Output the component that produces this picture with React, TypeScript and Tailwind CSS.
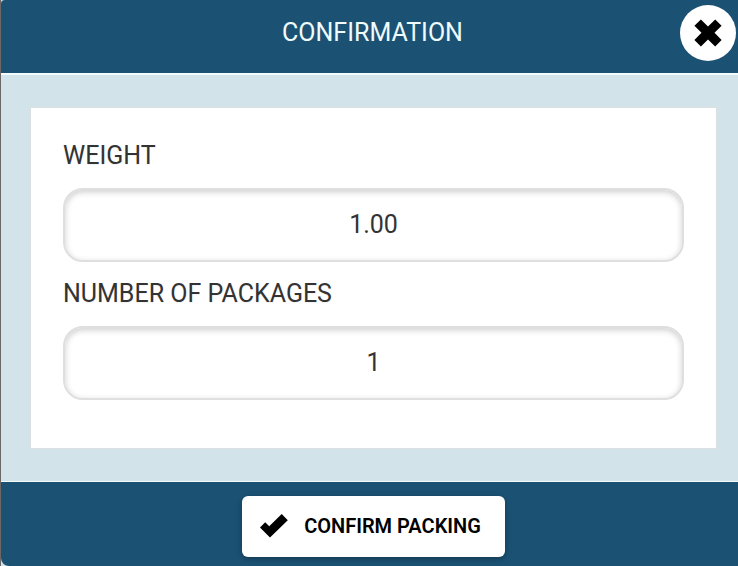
import React, { useState } from 'react'

type FieldProps = {
  id: string
  label: string
  value: string
  onChange: (value: string) => void
}

const CloseIcon = () => (
  <svg viewBox="0 0 28 28" className="w-7 h-7" fill="currentColor" aria-hidden="true">
    <path d="M0.4 6.7 6.9 0.4 14 7.4 21.2 0.4 27.6 6.7 20.5 13.8 27.6 21 21.2 27.5 14 20.4 6.9 27.5 0.4 21 7.5 13.8Z" />
  </svg>
)

const CheckIcon = () => (
  <svg viewBox="0 0 28 24" className="w-7 h-6" fill="currentColor" aria-hidden="true">
    <path d="M0 13.4 5.2 8.2 9.2 12.2 21.7 0 27.8 6.2 10 23.6Z" />
  </svg>
)

const Field = ({ id, label, value, onChange }: FieldProps) => (
  <div className="flex flex-col">
    <label htmlFor={id} className="h-16 pt-4 text-[25px] leading-8 text-[#333333] [text-shadow:0_1px_0_#f3f3f3]">
      {label}
    </label>
    <input
      id={id}
      type="text"
      inputMode="decimal"
      value={value}
      onChange={(e) => onChange(e.target.value)}
      className="w-full h-[74px] pb-0.5 rounded-[20px] border-2 border-[#dfdfdf] bg-white text-center text-[25px] text-[#333333] shadow-[inset_0_2px_6px_rgba(0,0,0,0.2)] outline-none"
    />
  </div>
)

const App = () => {
  const [weight, setWeight] = useState('1.00')
  const [packages, setPackages] = useState('1')

  return (
    <div className="min-h-screen bg-[#d3e3ea] font-['Roboto',sans-serif]">
      <div className="flex flex-col min-h-screen border-l border-[#6e6768] overflow-hidden">
        <header className="grid grid-cols-[1fr_auto_1fr] items-center h-[75px] pb-2 pl-2 pr-0.5 bg-[#1b5274] border-b-2 border-[#f4fbfb] rounded-tl">
          <h1 className="col-start-2 text-[25px] leading-8 text-[#f0fbfc]">CONFIRMATION</h1>
          <button
            type="button"
            aria-label="Close"
            className="justify-self-end flex items-center justify-center w-14 h-14 rounded-full bg-white text-black"
          >
            <CloseIcon />
          </button>
        </header>

        <main className="flex flex-col flex-1 py-8 pl-[29px] pr-[21px]">
          <form id="packing" className="flex-1 px-8 pt-4 pb-11 bg-white border border-[#dcdfe0]" onSubmit={(e) => e.preventDefault()}>
            <Field id="weight" label="WEIGHT" value={weight} onChange={setWeight} />
            <Field id="packages" label="NUMBER OF PACKAGES" value={packages} onChange={setPackages} />
          </form>
        </main>

        <footer className="flex justify-center h-[85px] pt-[14px] pl-2 bg-[#1b5274] border-t border-[#f4fbfb] rounded-bl-lg">
          <button
            type="submit"
            form="packing"
            className="flex items-center gap-4 h-[61px] pl-[18px] pr-6 pb-0.5 rounded-md bg-white text-black text-[20px] font-semibold shadow-[0_2px_6px_rgba(0,0,0,0.3)]"
          >
            <CheckIcon />
            CONFIRM PACKING
          </button>
        </footer>
      </div>
    </div>
  )
}

export default App
